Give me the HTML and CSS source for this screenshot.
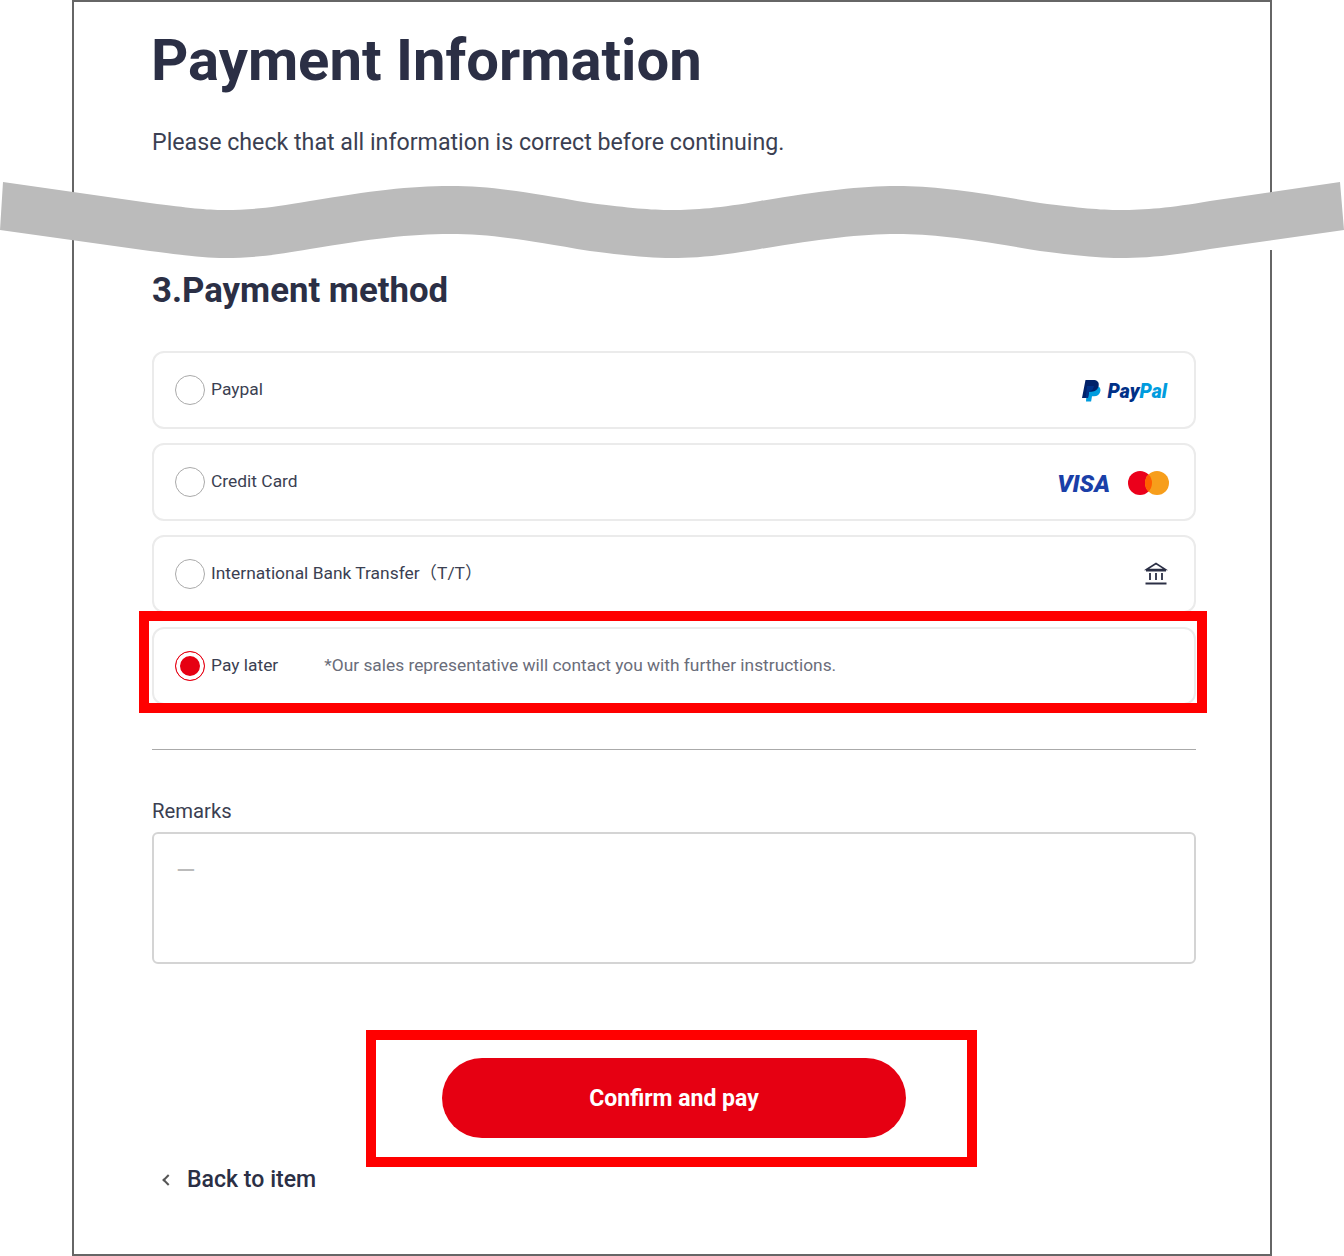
FILE: index.html
```html
<!DOCTYPE html>
<html>
<head>
<meta http-equiv="Content-Type" content="text/html; charset=UTF-8">
<title>Payment Information</title>
<link rel="stylesheet" href="styles.css">
</head>
<body>
<div id="page">
	<h1 class="title">Payment Information</h1>
	<p class="lead">Please check that all information is correct before continuing.</p>
	<h2 class="section">3.Payment method</h2>
	<div class="methods">
		<div class="method">
			<span class="radio"></span>
			<span class="name">Paypal</span>
			<span class="logo paypal">
				<svg class="pp-mark" width="20" height="22" viewBox="0 0 20 22">
					<path fill="#009cde" d="M5 6h8.5c3.500 0 5.400 1.900 4.900 5-.6 3.600-3.100 5.300-6.400 5.300H10l-.9 5.200H4z"/>
					<path fill="#012169" d="M3.500 0h7.500c4 0 6.300 1.900 5.700 5.500-.6 3.900-3.400 6.200-7.300 6.200H7.100L6 18H0z"/>
					<path fill="#003087" d="M5 6h7l-.4 1.500c-.8 2.700-2.600 4.200-5.300 4.200H7.100L6 18H3.600z"/>
				</svg>
				<span class="pp-text"><b>Pay</b><i>Pal</i></span>
			</span>
		</div>
		<div class="method">
			<span class="radio"></span>
			<span class="name">Credit Card</span>
			<span class="logo cards">
				<span class="visa">VISA</span>
				<svg width="41" height="24" viewBox="0 0 41 24">
					<circle cx="12" cy="12" r="12" fill="#eb001b"/>
					<circle cx="29" cy="12" r="12" fill="#f79e1b"/>
					<path fill="#ff5f00" d="M20.500 3.530A12 12 0 0 1 20.500 20.470 12 12 0 0 1 20.500 3.530z"/>
				</svg>
			</span>
		</div>
		<div class="method">
			<span class="radio"></span>
			<span class="name">International Bank Transfer（T/T）</span>
			<span class="logo bank">
				<svg width="24" height="24" viewBox="0 0 24 24" fill="none" stroke="#2b2f45">
					<path stroke-width="1.500" d="M2.500 8.500 12 2.500l9.500 6z"/>
					<path stroke-width="2" d="M2 9.500h20"/>
					<path stroke-width="1.800" d="M6 12v7M12 12v7M18 12v7"/>
					<path stroke-width="2" d="M1.500 22.500h21"/>
				</svg>
			</span>
		</div>
		<div class="method">
			<span class="radio checked"></span>
			<span class="name">Pay later</span>
			<span class="note">*Our sales representative will contact you with further instructions.</span>
		</div>
	</div>
	<hr class="rule">
	<label class="remarks-label">Remarks</label>
	<div class="remarks">—</div>
	<div class="submit-row">
		<button class="confirm" type="button">Confirm and pay</button>
	</div>
	<a class="back"><span class="chev"></span>Back to item</a>
</div>
<!-- annotation layer over the screenshot -->
<div class="frame-gap"></div>
<svg class="wave" width="1344" height="80" viewBox="0 0 1344 80">
	<path fill="#bbbbbb" d="M3 2 L150 23 C190 28 205 30 225 30 C250 30 270 28 310 21 C370 11 410 6 450 6 C490 6 520 11 590 23 C630 28 650 30 672 30 C695 30 720 28 760 21 C820 11 860 6 897 6 C935 6 970 11 1040 23 C1080 28 1100 30 1120 30 C1145 30 1170 28 1210 21 L1340 2 L1344 50 L1210 69 C1170 76 1145 78 1120 78 C1100 78 1080 76 1040 71 C970 59 935 54 897 54 C860 54 820 59 760 69 C720 76 695 78 672 78 C650 78 630 76 590 71 C520 59 490 54 450 54 C410 54 370 59 310 69 C270 76 250 78 225 78 C205 78 190 76 150 71 L0 50 Z"/>
</svg>
<div class="mark mark-later"></div>
<div class="mark mark-confirm"></div>
</body>
</html>
```

FILE: styles.css
```css
* {
	box-sizing: border-box;
	font-family: Roboto, "Liberation Sans", "Noto Sans CJK JP", sans-serif;
}

body {
	margin: 0;
	background-color: #FFF;
	color: #2b2f45;
}

#page {
	width: 1200px;
	height: 1256px;
	margin: 0 0 0 72px;
	padding: 0 74px 0 78px;
	border: 2px solid #666;
}

.title {
	margin: 22px 0 0 -1px;
	font-size: 58px;
	line-height: 72px;
	font-weight: 700;
}
.lead {
	margin: 30px 0 0;
	font-size: 23.2px;
	line-height: 32px;
	color: #3b3f52;
}
.section {
	margin: 110px 0 0;
	font-size: 34.75px;
	line-height: 44px;
	font-weight: 700;
}

.methods {
	display: flex;
	flex-direction: column;
	gap: 14px;
	margin-top: 39px;
}
.method {
	display: flex;
	align-items: center;
	height: 78px;
	padding: 0 26px 0 21px;
	border: 2px solid #ebebeb;
	border-radius: 12px;
}
.radio {
	width: 30px;
	height: 30px;
	margin-right: 6px;
	border: 1.5px solid #aaa;
	border-radius: 50%;
}
.radio.checked {
	border-color: #e60012;
	background-color: #e60012;
	box-shadow: inset 0 0 0 4px #FFF;
}
.name {
	padding-bottom: 2px;
	font-size: 17.4px;
	line-height: 22px;
	color: #3b3f52;
}
.note {
	margin-left: 46px;
	padding-bottom: 2px;
	font-size: 17.35px;
	line-height: 22px;
	color: #6a6d7a;
}
.logo {
	display: flex;
	align-items: center;
	margin-left: auto;
}
.paypal {
	padding-top: 2px;
}
.cards {
	margin-right: -1px;
	padding-top: 2px;
}
.bank {
	padding-bottom: 2px;
}
.pp-mark {
	margin-right: 6px;
}
.pp-text {
	margin-right: 1px;
	font-size: 19.5px;
	font-style: italic;
	font-weight: 900;
}
.pp-text b {
	color: #003087;
}
.pp-text i {
	color: #009cde;
}
.visa {
	margin-right: 18px;
	padding-top: 2px;
	font-size: 24px;
	font-style: italic;
	font-weight: 900;
	color: #1a3fa8;
}

.rule {
	margin: 44px 0 0;
	border: none;
	border-top: 1px solid #aaa;
}
.remarks-label {
	display: block;
	margin-top: 47px;
	font-size: 20.3px;
	line-height: 28px;
	color: #3b3f52;
}
.remarks {
	height: 132px;
	margin-top: 7px;
	padding: 22px 22px;
	border: 2px solid #d4d4d4;
	border-radius: 6px;
	font-size: 25px;
	color: #bbb;
}

.submit-row {
	display: flex;
	justify-content: center;
	margin-top: 94px;
}
.confirm {
	width: 464px;
	height: 80px;
	border: none;
	border-radius: 41px;
	background-color: #e60012;
	color: #FFF;
	font-size: 23px;
	font-weight: 700;
}

.back {
	display: flex;
	align-items: center;
	margin-top: 28px;
	padding-left: 12px;
	font-size: 23.1px;
	font-weight: 500;
}
.chev {
	width: 8px;
	height: 8px;
	margin-right: 15px;
	border-left: 2px solid #555;
	border-bottom: 2px solid #555;
	transform: rotate(45deg);
}

.frame-gap {
	position: absolute;
	left: 1269px;
	top: 236px;
	width: 4px;
	height: 14px;
	background-color: #FFF;
}
.wave {
	position: absolute;
	left: 0;
	top: 180px;
}
.mark {
	position: absolute;
	border: 10px solid #f00;
}
.mark-later {
	left: 139px;
	top: 611px;
	width: 1068px;
	height: 102px;
}
.mark-confirm {
	left: 366px;
	top: 1030px;
	width: 611px;
	height: 137px;
}
```
